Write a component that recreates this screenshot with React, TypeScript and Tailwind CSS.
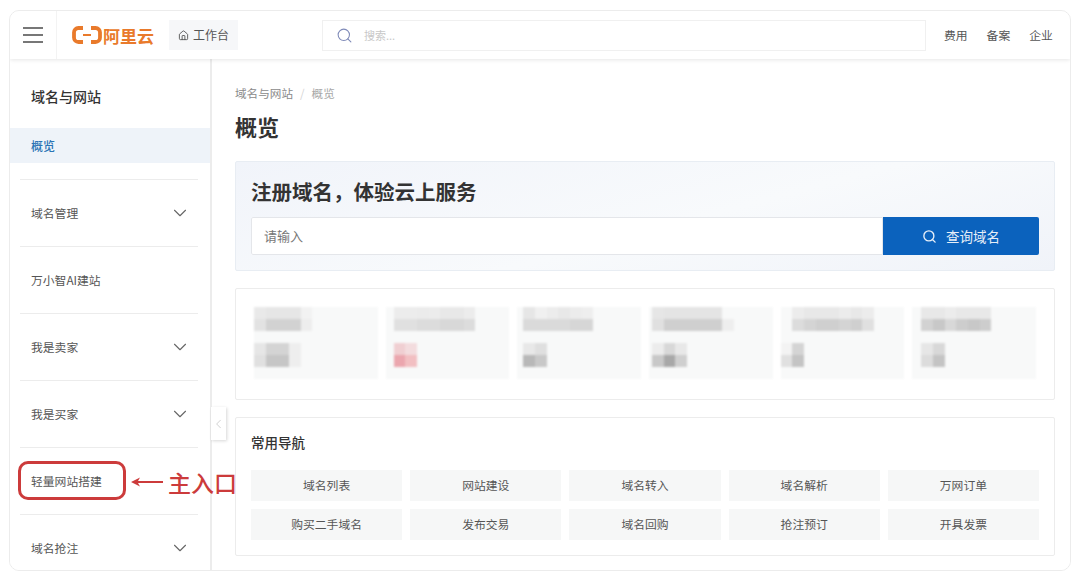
import { ChevronDown, ChevronLeft, House, Search } from "lucide-react";

const sideItems = [
  { label: "域名管理", arrow: true },
  { label: "万小智AI建站", arrow: false },
  { label: "我是卖家", arrow: true },
  { label: "我是买家", arrow: true },
  { label: "轻量网站搭建", arrow: false },
  { label: "域名抢注", arrow: true },
];

const navRows = [
  ["域名列表", "网站建设", "域名转入", "域名解析", "万网订单"],
  ["购买二手域名", "发布交易", "域名回购", "抢注预订", "开具发票"],
];

// mosaic cells copied from the pixelated figures in the stats card
const stats = [
  {
    pad: "pl-0",
    rows: [
      ["#e9e9e9", "#e6e6e6", "#e6e6e6", "#e6e6e6", "#f2f2f2"],
      ["#e2e2e2", "#d2d2d2", "#d2d2d2", "#d2d2d2", "#ededed"],
      ["#e6e6e6", "#d4d4d4", "#d4d4d4", "#eeeeee"],
      ["#e0e0e0", "#c6c6c6", "#c6c6c6", "#eeeeee"],
    ],
  },
  {
    pad: "pl-[8px]",
    rows: [
      ["#ececec", "#ececec", "#ebebeb", "#ececec", "#e8e8e8", "#e8e8e8", "#ececec"],
      ["#e0e0e0", "#e0e0e0", "#dcdcdc", "#dcdcdc", "#d8d8d8", "#d8d8d8", "#dcdcdc"],
      ["#f0cfd2", "#f3dcde"],
      ["#eba6ae", "#f2bfc2"],
    ],
  },
  {
    pad: "pl-[6px]",
    rows: [
      ["#e6e6e6", "#f0f0f0", "#ececec", "#e8e8e8", "#ececec", "#eeeeee"],
      ["#dadada", "#dadada", "#dadada", "#dadada", "#d6d6d6", "#d6d6d6"],
      ["#e8e8e8", "#dfdfdf"],
      ["#b8b8b8", "#c8c8c8"],
    ],
  },
  {
    pad: "pl-[3px]",
    rows: [
      ["#e6e6e6", "#e4e4e4", "#e4e4e4", "#e4e4e4", "#e4e4e4", "#e4e4e4"],
      ["#e0e0e0", "#cfcfcf", "#cfcfcf", "#cfcfcf", "#cfcfcf", "#cfcfcf", "#eeeeee"],
      ["#ececec", "#d8d8d8", "#e8e8e8"],
      ["#c8c8c8", "#a8a8a8", "#cfcfcf"],
    ],
  },
  {
    pad: "pl-0",
    rows: [
      ["#f8f9f9", "#ececec", "#e8e8e8", "#e8e8e8", "#e8e8e8", "#ececec", "#e8e8e8", "#ececec"],
      ["#f8f9f9", "#dcdcdc", "#d4d4d4", "#cfcfcf", "#cfcfcf", "#d4d4d4", "#cfcfcf", "#e0e0e0"],
      ["#f3f3f3", "#d4d4d4"],
      ["#e0e0e0", "#c4c4c4"],
    ],
  },
  {
    pad: "pl-[9px]",
    rows: [
      ["#e8e8e8", "#e8e8e8", "#ececec", "#e8e8e8", "#e8e8e8", "#e8e8e8"],
      ["#d2d2d2", "#c8c8c8", "#d8d8d8", "#cdcdcd", "#c8c8c8", "#cdcdcd"],
      ["#e6e6e6", "#d8d8d8"],
      ["#dcdcdc", "#c4c4c4"],
    ],
  },
];

function AliyunMark() {
  return (
    <svg width="30" height="18" viewBox="0 0 30 18" fill="none" stroke="#e97a2b">
      <path d="M11 2H6.500C3.800 2 2 3.800 2 6.500v5C2 14.200 3.800 16 6.500 16H11" strokeWidth="3.800" />
      <path d="M19 2h4.500C26.200 2 28 3.800 28 6.500v5c0 2.700-1.800 4.500-4.500 4.500H19" strokeWidth="3.800" />
      <path d="M11 9h8" strokeWidth="1.800" />
    </svg>
  );
}

function Header() {
  return (
    <header className="relative z-10 flex h-[48px] shrink-0 items-center bg-white shadow-[0_1px_4px_rgba(0,0,0,0.10)]">
      <div className="flex h-full w-[47px] items-center justify-center border-r border-[#f3f3f3]">
        <div className="flex w-[20px] flex-col gap-[5px]">
          <span className="h-[2px] bg-[#777777]" />
          <span className="h-[2px] bg-[#777777]" />
          <span className="h-[2px] bg-[#777777]" />
        </div>
      </div>
      <div className="ml-[15px] flex items-center gap-[1px]">
        <AliyunMark />
        <span className="text-[17px] leading-none font-semibold text-[#e97a2b]">阿里云</span>
      </div>
      <div className="ml-[15px] flex h-[30px] w-[69px] items-center justify-center gap-[4px] bg-[#f6f7f9] text-[12px] text-[#555555]">
        <House size={11} strokeWidth={2} />
        工作台
      </div>
      <div className="ml-[84px] flex h-[31px] w-[604px] items-center gap-[11px] border border-[#f0f0f0] pl-[13px]">
        <Search size={17} strokeWidth={1.500} className="text-[#7f8ab8]" />
        <span className="text-[11px] text-[#c8c8c8]">搜索...</span>
      </div>
      <nav className="ml-[18px] flex gap-[19px] text-[11.800px] text-[#555555]">
        <span>费用</span>
        <span>备案</span>
        <span>企业</span>
      </nav>
    </header>
  );
}

function Sidebar() {
  return (
    <aside className="relative w-[202px] shrink-0 border-r-2 border-[#ececec] bg-white">
      <div className="flex h-[69px] items-start pt-[27px] pl-[21px] text-[14px] leading-[20px] font-medium text-[#333333]">
        域名与网站
      </div>
      <div className="flex h-[35px] items-center bg-[#eef3f9] pl-[21px] text-[12px] font-medium text-[#2a74b5]">
        概览
      </div>
      <div className="h-[16px]" />
      {sideItems.map((item) => (
        <div key={item.label} className="mr-[12px] ml-[10px] flex h-[67px] items-center justify-between border-t border-[#ececec] pr-[7px] pb-[1px] pl-[11px] text-[11.800px] text-[#555555]">
          {item.label}
          {item.arrow ? <ChevronDown size={22} strokeWidth={1.200} className="text-[#666666]" /> : null}
        </div>
      ))}
      {/* red annotation drawn over the menu */}
      <div className="absolute top-[402px] left-[8px] h-[39px] w-[108px] rounded-[10px] border-[3px] border-[#cc3b3b]" />
      <svg className="absolute top-[417px] left-[120px]" width="34" height="12" viewBox="0 0 34 12">
        <path d="M1 6 10 1.500 8 5H33v2H8l2 3.500Z" fill="#cc3b3b" />
      </svg>
      <span className="absolute top-[408px] left-[158px] z-20 text-[23px] leading-[30px] font-medium whitespace-nowrap text-[#cc3b3b]">
        主入口
      </span>
      <div className="absolute top-[348px] -right-[16px] flex h-[33px] w-[15px] items-center justify-center bg-white shadow-[1px_1px_3px_rgba(0,0,0,0.16)]">
        <ChevronLeft size={20} strokeWidth={1} className="text-[#b5b5b5]" />
      </div>
    </aside>
  );
}

function StatsCard() {
  return (
    <section className="mt-[17px] grid h-[112px] grid-cols-6 gap-[8px] rounded-[2px] border border-[#ececec] px-[18px] pt-[18px] pb-[20px]">
      {stats.map((s, i) => (
        <div key={i} className={`${s.pad} bg-[#f8f9f9] blur-[1px]`}>
          {s.rows.map((row, r) => (
            <div key={r} className={r === 2 ? "mt-[12px] flex h-[12px]" : "flex h-[12px]"}>
              {row.map((color, c) => (
                <span key={c} className="h-full w-[11.700px]" style={{ backgroundColor: color }} />
              ))}
            </div>
          ))}
        </div>
      ))}
    </section>
  );
}

function MainPanel() {
  return (
    <main className="min-w-0 flex-1 overflow-hidden bg-white pt-[26px] pr-[15px] pl-[23px]">
      <div className="flex gap-[7px] text-[11.600px] leading-[16px] text-[#8a8a8a]">
        <span>域名与网站</span>
        <span className="text-[#d5d5d5]">/</span>
        <span className="text-[#a8a8a8]">概览</span>
      </div>
      <h1 className="mt-[9px] text-[22px] leading-[32px] font-semibold text-[#333333]">概览</h1>
      <section className="mt-[19px] h-[110px] rounded-[2px] border border-[#e8edf3] bg-[linear-gradient(165deg,#f1f4fa_0%,#f8fafc_55%,#f0f3f9_100%)] px-[15px] pt-[15px]">
        <h2 className="text-[20.500px] leading-[28px] font-semibold text-[#333333]">注册域名，体验云上服务</h2>
        <div className="mt-[12px] flex h-[38px] overflow-hidden rounded-[2px]">
          <div className="flex flex-1 items-center rounded-l-[2px] border border-[#e4e6ea] bg-white pl-[12px] text-[13px] text-[#777777]">
            请输入
          </div>
          <div className="flex w-[156px] items-center justify-center gap-[9px] bg-[#0b62bd] text-[13.500px] text-[#e6eef8]">
            <Search size={15} strokeWidth={2.200} />
            查询域名
          </div>
        </div>
      </section>
      <StatsCard />
      <section className="mt-[17px] h-[139px] rounded-[2px] border border-[#ececec] px-[15px] pt-[15px]">
        <h3 className="text-[13.500px] leading-[18px] font-medium text-[#333333]">常用导航</h3>
        <div className="mt-[19px] flex flex-col gap-[8px]">
          {navRows.map((row) => (
            <div key={row[0]} className="grid grid-cols-5 gap-[8px]">
              {row.map((label) => (
                <div key={label} className="flex h-[31px] items-center justify-center bg-[#f6f7f7] pb-[2px] text-[11.800px] text-[#555555]">
                  {label}
                </div>
              ))}
            </div>
          ))}
        </div>
      </section>
    </main>
  );
}

export default function App() {
  return (
    <div className="h-[581px] w-[1080px] overflow-hidden bg-white px-[9px] pt-[10px] font-['Noto_Sans_CJK_SC','Liberation_Sans',sans-serif]">
      <div className="flex h-[561px] flex-col overflow-hidden rounded-[10px] border border-[#ececec]">
        <Header />
        <div className="flex min-h-0 flex-1">
          <Sidebar />
          <MainPanel />
        </div>
      </div>
    </div>
  );
}
